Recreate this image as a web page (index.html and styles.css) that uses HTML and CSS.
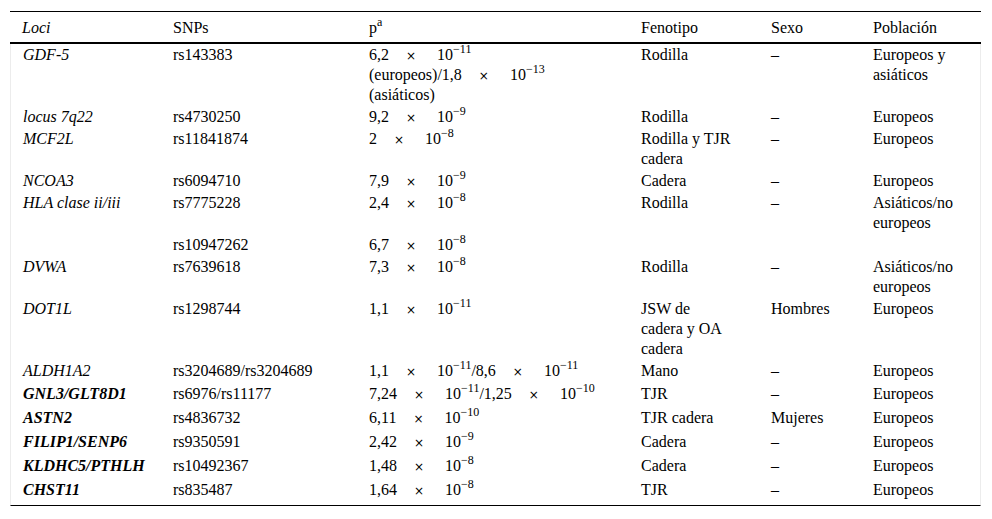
FILE: index.html
```html
<!DOCTYPE html>
<html lang="es">
<head>
<meta charset="utf-8">
<title>Loci</title>
<link rel="stylesheet" href="styles.css">
</head>
<body>
<div class="wrap">
<table class="t">
<colgroup>
<col class="c1"><col class="c2"><col class="c3"><col class="c4"><col class="c5"><col class="c6">
</colgroup>
<thead>
<tr><th class="it">Loci</th><th>SNPs</th><th>p<sup>a</sup></th><th>Fenotipo</th><th>Sexo</th><th>Población</th></tr>
</thead>
<tbody>
<tr><td class="it">GDF-5</td><td>rs143383</td><td>6,2<span class="x">×</span>10<sup>−11</sup><br>(europeos)/1,8<span class="x">×</span>10<sup>−13</sup><br>(asiáticos)</td><td>Rodilla</td><td>–</td><td>Europeos y asiáticos</td></tr>
<tr><td class="it">locus 7q22</td><td>rs4730250</td><td>9,2<span class="x">×</span>10<sup>−9</sup></td><td>Rodilla</td><td>–</td><td>Europeos</td></tr>
<tr><td class="it">MCF2L</td><td>rs11841874</td><td>2<span class="x">×</span>10<sup>−8</sup></td><td>Rodilla y TJR cadera</td><td>–</td><td>Europeos</td></tr>
<tr><td class="it">NCOA3</td><td>rs6094710</td><td>7,9<span class="x">×</span>10<sup>−9</sup></td><td>Cadera</td><td>–</td><td>Europeos</td></tr>
<tr><td class="it">HLA clase ii/iii</td><td>rs7775228</td><td>2,4<span class="x">×</span>10<sup>−8</sup></td><td>Rodilla</td><td>–</td><td>Asiáticos/no europeos</td></tr>
<tr><td class="it"></td><td>rs10947262</td><td>6,7<span class="x">×</span>10<sup>−8</sup></td><td></td><td></td><td></td></tr>
<tr><td class="it">DVWA</td><td>rs7639618</td><td>7,3<span class="x">×</span>10<sup>−8</sup></td><td>Rodilla</td><td>–</td><td>Asiáticos/no europeos</td></tr>
<tr><td class="it">DOT1L</td><td>rs1298744</td><td>1,1<span class="x">×</span>10<sup>−11</sup></td><td>JSW de cadera y OA cadera</td><td>Hombres</td><td>Europeos</td></tr>
<tr><td class="it">ALDH1A2</td><td>rs3204689/rs3204689</td><td>1,1<span class="x">×</span>10<sup>−11</sup>/8,6<span class="x">×</span>10<sup>−11</sup></td><td>Mano</td><td>–</td><td>Europeos</td></tr>
<tr class="big"><td class="bi">GNL3/GLT8D1</td><td>rs6976/rs11177</td><td>7,24<span class="x">×</span>10<sup>−11</sup>/1,25<span class="x">×</span>10<sup>−10</sup></td><td>TJR</td><td>–</td><td>Europeos</td></tr>
<tr class="big"><td class="bi">ASTN2</td><td>rs4836732</td><td>6,11<span class="x">×</span>10<sup>−10</sup></td><td>TJR cadera</td><td>Mujeres</td><td>Europeos</td></tr>
<tr class="big"><td class="bi">FILIP1/SENP6</td><td>rs9350591</td><td>2,42<span class="x">×</span>10<sup>−9</sup></td><td>Cadera</td><td>–</td><td>Europeos</td></tr>
<tr class="big"><td class="bi">KLDHC5/PTHLH</td><td>rs10492367</td><td>1,48<span class="x">×</span>10<sup>−8</sup></td><td>Cadera</td><td>–</td><td>Europeos</td></tr>
<tr class="big last"><td class="bi">CHST11</td><td>rs835487</td><td>1,64<span class="x">×</span>10<sup>−8</sup></td><td>TJR</td><td>–</td><td>Europeos</td></tr>
</tbody>
</table>
</div>
</body>
</html>
```
FILE: styles.css
```css
html, body {
  margin: 0;
  padding: 0;
  background: #fff;
}
.wrap {
  padding: 11px 0 0 10px;
}
.t {
  border-collapse: separate;
  border-spacing: 0;
  table-layout: fixed;
  width: 971px;
  font-family: "Liberation Serif", "Times New Roman", serif;
  font-size: 16px;
  color: #000;
}
.c1 { width: 151px; }
.c2 { width: 196px; }
.c3 { width: 272px; }
.c4 { width: 130px; }
.c5 { width: 102px; }
.c6 { width: 120px; }
.t th {
  font-weight: normal;
  text-align: left;
  line-height: 20px;
  padding: 6px 12px 4px;
  border-top: 1px solid #000;
  border-bottom: 2px solid #000;
}
.t td {
  vertical-align: top;
  line-height: 20px;
  padding: 1px 12px;
}
.t td:nth-child(4) { padding-right: 26px; }
.t td:first-child { border-left: 1px solid #ececec; }
.t td:last-child { border-right: 1px solid #ececec; }
.t .big td { line-height: 22px; }
.t .last td {
  padding-bottom: 4px;
  border-bottom: 1px solid #000;
}
.it { font-style: italic; }
.bi { font-style: italic; font-weight: bold; }
.x {
  margin: 0 21px 0 17px;
  font-family: "DejaVu Sans", sans-serif;
  font-size: 12px;
  line-height: 0;
}
sup {
  font-size: 12px;
  line-height: 0;
  vertical-align: baseline;
  position: relative;
  top: -7px;
}
```
